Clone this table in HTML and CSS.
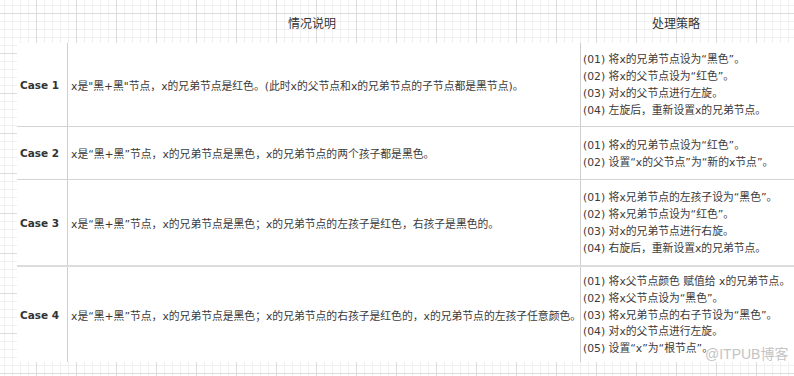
FILE: index.html
```html
<!DOCTYPE html>
<html lang="zh-CN">
<head>
    <meta charset="UTF-8">
    <meta name="viewport" content="width=device-width, initial-scale=1.0">
    <title>红黑树 删除修复情况</title>
    <link rel="stylesheet" href="styles.css">
</head>
<body>
    <div class="sheet">
        <div class="head">
            <div></div>
            <div class="head-desc">情况说明</div>
            <div class="head-steps">处理策略</div>
        </div>

        <div class="row row-1">
            <div class="case">Case 1</div>
            <div class="desc">x是"黑+黑"节点，x的兄弟节点是红色。(此时x的父节点和x的兄弟节点的子节点都是黑节点)。</div>
            <div class="steps">
                <p>(01) 将x的兄弟节点设为“黑色”。</p>
                <p>(02) 将x的父节点设为“红色”。</p>
                <p>(03) 对x的父节点进行左旋。</p>
                <p>(04) 左旋后，重新设置x的兄弟节点。</p>
            </div>
        </div>

        <div class="row row-2">
            <div class="case">Case 2</div>
            <div class="desc">x是“黑+黑”节点，x的兄弟节点是黑色，x的兄弟节点的两个孩子都是黑色。</div>
            <div class="steps">
                <p>(01) 将x的兄弟节点设为“红色”。</p>
                <p>(02) 设置“x的父节点”为“新的x节点”。</p>
            </div>
        </div>

        <div class="row row-3">
            <div class="case">Case 3</div>
            <div class="desc">x是“黑+黑”节点，x的兄弟节点是黑色；x的兄弟节点的左孩子是红色，右孩子是黑色的。</div>
            <div class="steps">
                <p>(01) 将x兄弟节点的左孩子设为“黑色”。</p>
                <p>(02) 将x兄弟节点设为“红色”。</p>
                <p>(03) 对x的兄弟节点进行右旋。</p>
                <p>(04) 右旋后，重新设置x的兄弟节点。</p>
            </div>
        </div>

        <div class="row row-4">
            <div class="case">Case 4</div>
            <div class="desc">x是“黑+黑”节点，x的兄弟节点是黑色；x的兄弟节点的右孩子是红色的，x的兄弟节点的左孩子任意颜色。</div>
            <div class="steps">
                <p>(01) 将x父节点颜色 赋值给 x的兄弟节点。</p>
                <p>(02) 将x父节点设为“黑色”。</p>
                <p>(03) 将x兄弟节点的右子节设为“黑色”。</p>
                <p>(04) 对x的父节点进行左旋。</p>
                <p>(05) 设置“x”为“根节点”。</p>
            </div>
        </div>
    </div>

    <div class="watermark">@ITPUB博客</div>
</body>
</html>
```

FILE: styles.css
```css
html, body {
    margin: 0;
    padding: 0;
}
body {
    position: relative;
    height: 376px;
    overflow: hidden;
    font-family: "DejaVu Sans", "Noto Sans CJK SC", sans-serif;
    font-size: 10.8px;
    color: #3a3a3a;
    background-color: #fff;
    background-image:
        linear-gradient(#dcdcdc 1px, transparent 1px),
        linear-gradient(90deg, #dcdcdc 1px, transparent 1px),
        linear-gradient(#f0f0f0 1px, transparent 1px),
        linear-gradient(90deg, #f0f0f0 1px, transparent 1px);
    background-size: 40px 40px, 40px 40px, 8px 8px, 8px 8px;
    background-position: 0 13px, 36px 0, 0 5px, 4px 0;
}
.sheet {
    margin-left: 17px;
    width: 820px;
}
.head, .row {
    display: grid;
    grid-template-columns: 51px 513px 1fr;
}
.head {
    height: 43px;
    align-items: center;
    font-size: 12px;
    color: #333;
}
.head-desc {
    padding-left: 220px;
    padding-top: 2px;
}
.head-steps {
    padding-left: 71px;
    padding-top: 2px;
}
.row {
    background: #fff;
    border-top: 1px solid #d4d4d4;
}
.row-1 { height: 83px; border-top: none; }
.row-2 { height: 52px; }
.row-3 { height: 85px; }
.row-4 { height: 95px; border-top: 2px solid #dcdcdc; }

.row > div {
    display: flex;
    flex-direction: column;
    justify-content: center;
}
.case {
    padding-left: 3px;
    font-size: 10.5px;
    font-weight: bold;
    color: #333;
    border-right: 1px solid #cfcfcf;
}
.desc {
    padding-left: 3px;
    border-right: 1px solid #cfcfcf;
    white-space: nowrap;
    overflow: hidden;
}
.steps {
    padding-left: 2px;
    padding-top: 3px;
    white-space: nowrap;
}
.steps p {
    margin: 0;
    line-height: 16.8px;
}
.watermark {
    position: absolute;
    left: 705px;
    top: 343px;
    white-space: nowrap;
    font-family: "Liberation Sans", "Noto Sans CJK SC", sans-serif;
    font-size: 14px;
    color: #c4c4c4;
}
```
